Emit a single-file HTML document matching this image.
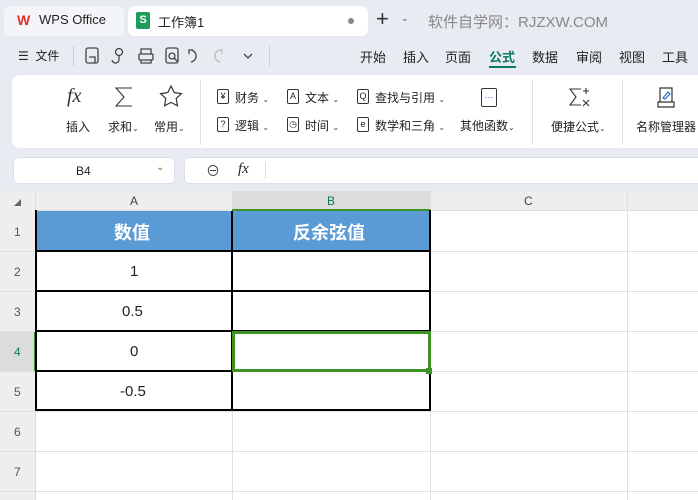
<!DOCTYPE html>
<html><head><meta charset="utf-8"><style>
*{margin:0;padding:0;box-sizing:border-box}
body{width:698px;height:500px;overflow:hidden;background:#e8ecf2;font-family:"Liberation Sans","Noto Sans CJK SC",sans-serif;color:#222;position:relative}
.a{position:absolute;white-space:nowrap}
.t12{font-size:12px}.t13{font-size:13px}
.ic{position:absolute;width:12px;height:15px;border:1.2px solid #333;border-radius:2px;font-size:9px;text-align:center;line-height:12px}
.car{font-size:8px;color:#444}
</style></head><body>
<!-- tabs -->
<div class="a" style="left:4px;top:6px;width:120px;height:30px;background:#f3f5f8;border-radius:7px"></div>
<div class="a" style="left:17px;top:12px;font-size:14px;font-weight:bold;color:#e0302c">W</div>
<div class="a t13" style="left:39px;top:12px">WPS Office</div>
<div class="a" style="left:128px;top:6px;width:240px;height:30px;background:#fff;border-radius:7px"></div>
<div class="a" style="left:136px;top:12px;width:14px;height:17px;background:#1f9b5a;border-radius:2px;color:#fff;font-size:11px;font-weight:bold;text-align:center;line-height:17px">S</div>
<div class="a t13" style="left:158px;top:12px">工作簿1</div>
<div class="a" style="left:348px;top:18px;width:6px;height:6px;border-radius:3px;background:#888"></div>
<div class="a" style="left:376px;top:6px;font-size:22px;color:#333">+</div>
<div class="a" style="left:401px;top:13px;font-size:9px;color:#555">⌄</div>
<div class="a" style="left:428px;top:11px;font-size:15px;color:#888">软件自学网：RJZXW.COM</div>
<!-- menu row -->
<div class="a t12" style="left:18px;top:47px">☰&nbsp;&nbsp;文件</div>
<div class="a" style="left:73px;top:46px;width:1px;height:20px;background:#ccc"></div>
<svg class="a" style="left:82px;top:44px" width="180" height="24" viewBox="0 0 180 24" fill="none" stroke="#444" stroke-width="1.3">
<rect x="4" y="4" width="12" height="15" rx="2"/><path d="M7 13h6v6"/>
<circle cx="37" cy="8" r="3.5"/><path d="M37 11v4a3.5 3.5 0 0 1-7 1"/>
<rect x="57" y="10" width="14" height="6" rx="1"/><path d="M59 10V5h10v5M59 16v3h10v-3"/>
<rect x="84" y="4" width="12" height="15" rx="2"/><circle cx="90" cy="12" r="3"/><path d="M92 14l4 4"/>
<path d="M111 6h-4v4M107 6a6 6 0 1 1 2 12"/>
<path d="M136 6h4v4M140 6a6 6 0 1 0-2 12" stroke="#bbb"/>
<path d="M162 10l4 4 4-4"/>
</svg>
<div class="a" style="left:269px;top:46px;width:1px;height:20px;background:#ccc"></div>
<div class="a t13" style="left:360px;top:47px">开始</div>
<div class="a t13" style="left:403px;top:47px">插入</div>
<div class="a t13" style="left:445px;top:47px">页面</div>
<div class="a t13" style="left:489px;top:47px;color:#0d7a5f;font-weight:bold">公式</div>
<div class="a t13" style="left:532px;top:47px">数据</div>
<div class="a t13" style="left:576px;top:47px">审阅</div>
<div class="a t13" style="left:619px;top:47px">视图</div>
<div class="a t13" style="left:662px;top:47px">工具</div>
<div class="a" style="left:489px;top:66px;width:27px;height:2px;background:#0d7a5f"></div>
<!-- ribbon -->
<div class="a" style="left:12px;top:75px;width:700px;height:73px;background:#fff;border-radius:8px"></div>
<div class="a" style="left:67px;top:85px;font-size:20px;font-style:italic;font-family:'Liberation Serif',serif;color:#333">fx</div>
<svg class="a" style="left:112px;top:85px" width="24" height="24" viewBox="0 0 24 24" fill="none" stroke="#333" stroke-width="1.1"><path d="M20 3H4l8 9-8 9h16"/></svg>
<svg class="a" style="left:158px;top:84px" width="26" height="24" viewBox="0 0 26 24" fill="none" stroke="#333" stroke-width="1.2"><path d="M13 2l3.2 6.6 7.2 1-5.2 5 1.3 7.2L13 18.4l-6.5 3.4 1.3-7.2-5.2-5 7.2-1z"/></svg>
<div class="a t12" style="left:66px;top:118px">插入</div>
<div class="a t12" style="left:108px;top:118px">求和<span class="car">⌄</span></div>
<div class="a t12" style="left:154px;top:118px">常用<span class="car">⌄</span></div>
<div class="a" style="left:200px;top:80px;width:1px;height:65px;background:#e0e0e0"></div>
<div class="ic" style="left:217px;top:89px">¥</div><div class="a t12" style="left:235px;top:89px">财务 <span class="car">⌄</span></div>
<div class="ic" style="left:217px;top:117px">?</div><div class="a t12" style="left:235px;top:117px">逻辑 <span class="car">⌄</span></div>
<div class="ic" style="left:287px;top:89px">A</div><div class="a t12" style="left:305px;top:89px">文本 <span class="car">⌄</span></div>
<div class="ic" style="left:287px;top:117px">◷</div><div class="a t12" style="left:305px;top:117px">时间 <span class="car">⌄</span></div>
<div class="ic" style="left:357px;top:89px">Q</div><div class="a t12" style="left:375px;top:89px">查找与引用 <span class="car">⌄</span></div>
<div class="ic" style="left:357px;top:117px">e</div><div class="a t12" style="left:375px;top:117px">数学和三角 <span class="car">⌄</span></div>
<div class="a" style="left:481px;top:88px;width:16px;height:19px;border:1.2px solid #333;border-radius:2px;color:#2a6fd6;font-size:9px;text-align:center;line-height:16px">···</div>
<div class="a t12" style="left:460px;top:117px">其他函数<span class="car">⌄</span></div>
<div class="a" style="left:532px;top:80px;width:1px;height:65px;background:#e0e0e0"></div>
<svg class="a" style="left:568px;top:86px" width="24" height="24" viewBox="0 0 24 24" fill="none" stroke="#333" stroke-width="1.1"><path d="M13 3H2l6 8-6 8h11M18 2v6M15 5h6M15 14l6 6M21 14l-6 6"/></svg>
<div class="a t12" style="left:551px;top:118px">便捷公式<span class="car">⌄</span></div>
<div class="a" style="left:622px;top:80px;width:1px;height:65px;background:#e0e0e0"></div>
<svg class="a" style="left:656px;top:86px" width="20" height="24" viewBox="0 0 20 24" fill="none" stroke="#333" stroke-width="1.2"><path d="M4 2h12v14H4zM2 16h16v5H2z"/><path d="M7 12l5-6 2 2-5 5z" stroke="#2a6fd6"/></svg>
<div class="a t12" style="left:636px;top:118px">名称管理器</div>
<!-- formula bar -->
<div class="a" style="left:13px;top:157px;width:162px;height:27px;background:#fff;border-radius:5px;border:1px solid #dde"></div>
<div class="a t12" style="left:76px;top:164px">B4</div>
<div class="a" style="left:156px;top:162px;font-size:10px;color:#666">⌄</div>
<div class="a" style="left:184px;top:157px;width:520px;height:27px;background:#fff;border-radius:5px;border:1px solid #dde"></div>
<div class="a" style="left:206px;top:161px;font-size:14px;color:#444">⊖</div>
<div class="a" style="left:238px;top:161px;font-size:15px;font-style:italic;font-family:'Liberation Serif',serif">fx</div>
<div class="a" style="left:265px;top:162px;width:1px;height:17px;background:#ddd"></div>
<!-- grid -->
<div class="a" style="left:0;top:191px;width:698px;height:309px;background:#fff"></div>
<div class="a" style="left:0;top:191px;width:698px;height:20px;background:#eeeeee;border-bottom:1px solid #ddd"></div>
<div class="a" style="left:0;top:191px;width:36px;height:309px;background:#eeeeee;border-right:1px solid #ddd"></div>
<div class="a" style="left:232px;top:191px;width:198px;height:20px;background:#dcdcdc;border-bottom:2px solid #3f9324"></div>
<div class="a" style="left:0;top:331px;width:36px;height:40px;background:#dcdcdc;border-right:2px solid #3f9324"></div>
<div class="a" style="left:14px;top:198px;font-size:7px;color:#666">◢</div>
<div class="a t12" style="left:130px;top:194px;color:#444">A</div>
<div class="a t12" style="left:327px;top:194px;color:#0d7a5f">B</div>
<div class="a t12" style="left:524px;top:194px;color:#444">C</div>
<div class="a" style="left:232px;top:211px;width:1px;height:289px;background:#e0e0e0"></div>
<div class="a" style="left:430px;top:191px;width:1px;height:309px;background:#e0e0e0"></div>
<div class="a" style="left:627px;top:191px;width:1px;height:309px;background:#e0e0e0"></div>
<div class="a" style="left:0;top:251px;width:698px;height:1px;background:#e0e0e0"></div>
<div class="a" style="left:0;top:291px;width:698px;height:1px;background:#e0e0e0"></div>
<div class="a" style="left:0;top:331px;width:698px;height:1px;background:#e0e0e0"></div>
<div class="a" style="left:0;top:371px;width:698px;height:1px;background:#e0e0e0"></div>
<div class="a" style="left:0;top:411px;width:698px;height:1px;background:#e0e0e0"></div>
<div class="a" style="left:0;top:451px;width:698px;height:1px;background:#e0e0e0"></div>
<div class="a" style="left:0;top:491px;width:698px;height:1px;background:#e0e0e0"></div>
<div class="a t12" style="left:14px;top:225px;color:#555">1</div>
<div class="a t12" style="left:14px;top:265px;color:#555">2</div>
<div class="a t12" style="left:14px;top:305px;color:#555">3</div>
<div class="a t12" style="left:14px;top:345px;color:#0d7a5f">4</div>
<div class="a t12" style="left:14px;top:385px;color:#555">5</div>
<div class="a t12" style="left:14px;top:425px;color:#555">6</div>
<div class="a t12" style="left:14px;top:465px;color:#555">7</div>
<!-- table -->
<div class="a" style="left:36px;top:211px;width:394px;height:40px;background:#5b9bd5"></div>
<div class="a" style="left:35px;top:210px;width:396px;height:201px;border:2px solid #000;border-top:none"></div>
<div class="a" style="left:231px;top:211px;width:2px;height:200px;background:#000"></div>
<div class="a" style="left:35px;top:250px;width:396px;height:2px;background:#000"></div>
<div class="a" style="left:35px;top:290px;width:396px;height:2px;background:#000"></div>
<div class="a" style="left:35px;top:330px;width:396px;height:2px;background:#000"></div>
<div class="a" style="left:35px;top:370px;width:396px;height:2px;background:#000"></div>
<div class="a" style="left:114px;top:219px;font-size:18px;font-weight:bold;color:#fff">数值</div>
<div class="a" style="left:293px;top:219px;font-size:18px;font-weight:bold;color:#fff">反余弦值</div>
<div class="a" style="left:130px;top:263px;font-size:15px">1</div>
<div class="a" style="left:122px;top:303px;font-size:15px">0.5</div>
<div class="a" style="left:130px;top:343px;font-size:15px">0</div>
<div class="a" style="left:120px;top:383px;font-size:15px">-0.5</div>
<div class="a" style="left:232px;top:331px;width:199px;height:41px;border:3px solid #3f9324"></div>
<div class="a" style="left:426px;top:368px;width:6px;height:6px;background:#3f9324"></div>
</body></html>
